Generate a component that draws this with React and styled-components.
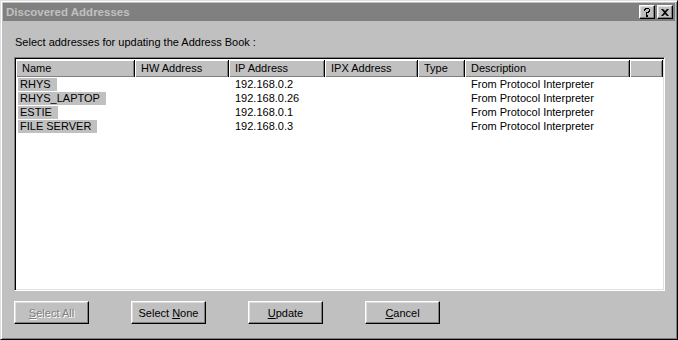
import styled, { createGlobalStyle } from 'styled-components'

const GlobalStyle = createGlobalStyle`
  html, body {
    margin: 0;
    padding: 0;
    background: #c0c0c0;
  }
  body {
    font-family: "Liberation Sans", Arial, sans-serif;
    font-size: 11px;
    color: #000;
  }
`

const columns = [
  { key: 'name', label: 'Name', width: 119 },
  { key: 'hw', label: 'HW Address', width: 94 },
  { key: 'ip', label: 'IP Address', width: 96 },
  { key: 'ipx', label: 'IPX Address', width: 93 },
  { key: 'type', label: 'Type', width: 47 },
  { key: 'desc', label: 'Description', width: 165 }
]

const rows = [
  { name: 'RHYS', ip: '192.168.0.2', desc: 'From Protocol Interpreter' },
  { name: 'RHYS_LAPTOP', ip: '192.168.0.26', desc: 'From Protocol Interpreter' },
  { name: 'ESTIE', ip: '192.168.0.1', desc: 'From Protocol Interpreter' },
  { name: 'FILE SERVER', ip: '192.168.0.3', desc: 'From Protocol Interpreter' }
]

const Window = styled.div`
  box-sizing: border-box;
  width: 678px;
  height: 340px;
  background: #c0c0c0;
  border: 1px solid;
  border-color: #dfdfdf #000 #000 #dfdfdf;
  box-shadow: inset 1px 1px 0 #fff, inset -1px -1px 0 #808080;
  padding: 2px;
  display: flex;
  flex-direction: column;
`

const TitleBar = styled.div`
  height: 18px;
  background: #808080;
  color: #c0c0c0;
  font-weight: bold;
  display: flex;
  align-items: center;
  justify-content: space-between;
  padding: 0 2px 0 3px;
`

const TitleText = styled.span`
  font-size: 11.5px;
`

const TitleButtons = styled.div`
  display: flex;
  gap: 2px;
`

const CaptionButton = styled.div`
  box-sizing: border-box;
  width: 16px;
  height: 14px;
  background: #c0c0c0;
  border: 1px solid;
  border-color: #fff #000 #000 #fff;
  box-shadow: inset -1px -1px 0 #808080, inset 1px 1px 0 #dfdfdf;
  display: flex;
  align-items: center;
  justify-content: center;
  color: #000;
`

const Content = styled.div`
  flex: 1;
  display: flex;
  flex-direction: column;
  padding: 0 10px 0 11px;
`

const Prompt = styled.div`
  margin-top: 15px;
  height: 13px;
  line-height: 13px;
  padding-left: 1px;
`

const ListView = styled.div`
  box-sizing: border-box;
  margin-top: 8px;
  width: 651px;
  height: 234px;
  background: #fff;
  border: 1px solid;
  border-color: #808080 #fff #fff #808080;
  box-shadow: inset 1px 1px 0 #000, inset -1px -1px 0 #dfdfdf;
  padding: 2px 2px 0 1px;
  overflow: hidden;
`

const HeaderRow = styled.div`
  display: flex;
  height: 17px;
`

const HeaderCell = styled.div`
  box-sizing: border-box;
  width: ${p => p.$width}px;
  flex: none;
  height: 17px;
  background: #c0c0c0;
  border-right: 1px solid #000;
  box-shadow: inset 1px 1px 0 #fff, inset -1px -1px 0 #808080;
  padding-left: 6px;
  line-height: 17px;
  white-space: nowrap;
  overflow: hidden;
`

const Row = styled.div`
  display: flex;
  height: 14px;
  line-height: 14px;
`

const Cell = styled.div`
  width: ${p => p.$width}px;
  flex: none;
  padding-left: ${p => (p.$first ? 2 : 6)}px;
  box-sizing: border-box;
  white-space: nowrap;
`

const Selected = styled.span`
  display: inline-block;
  background: #c0c0c0;
  padding: 0 6px 0 2px;
  height: 13px;
  line-height: 13px;
`

const ButtonRow = styled.div`
  display: flex;
  gap: 42px;
  margin-top: 10px;
`

const Button = styled.div`
  box-sizing: border-box;
  width: 75px;
  height: 23px;
  background: #c0c0c0;
  border: 1px solid;
  border-color: #fff #000 #000 #fff;
  box-shadow: inset -1px -1px 0 #808080, inset 1px 1px 0 #dfdfdf;
  display: flex;
  align-items: center;
  justify-content: center;
  color: ${p => (p.$disabled ? '#808080' : '#000')};
  text-shadow: ${p => (p.$disabled ? '1px 1px 0 #fff' : 'none')};
  & u {
    text-underline-offset: 1px;
  }
`

const HelpIcon = () => (
  <svg width='8' height='9' viewBox='0 0 8 9'>
    <path d='M1 1h1V0h4v1h1v3H6v1H4v2H3V4h2V3h1V1H3v1H2v1H1z M3 7h2v2H3z' fill='#000' />
  </svg>
)

const CloseIcon = () => (
  <svg width='8' height='7' viewBox='0 0 8 7'>
    <path d='M0 0h2l2 2 2-2h2L5 3.5 8 7H6L4 5 2 7H0l3-3.5z' fill='#000' />
  </svg>
)

const App = () => {
  return (
    <>
      <GlobalStyle />
      <Window>
        <TitleBar>
          <TitleText>Discovered Addresses</TitleText>
          <TitleButtons>
            <CaptionButton><HelpIcon /></CaptionButton>
            <CaptionButton><CloseIcon /></CaptionButton>
          </TitleButtons>
        </TitleBar>
        <Content>
          <Prompt>Select addresses for updating the Address Book :</Prompt>
          <ListView>
            <HeaderRow>
              {columns.map(col => (
                <HeaderCell key={col.key} $width={col.width}>{col.label}</HeaderCell>
              ))}
              <HeaderCell $width={33} />
            </HeaderRow>
            {rows.map(row => (
              <Row key={row.name}>
                <Cell $width={119} $first><Selected>{row.name}</Selected></Cell>
                <Cell $width={94} />
                <Cell $width={96}>{row.ip}</Cell>
                <Cell $width={93} />
                <Cell $width={47} />
                <Cell $width={165}>{row.desc}</Cell>
              </Row>
            ))}
          </ListView>
          <ButtonRow>
            <Button $disabled><span><u>S</u>elect All</span></Button>
            <Button><span>Select <u>N</u>one</span></Button>
            <Button><span><u>U</u>pdate</span></Button>
            <Button><span><u>C</u>ancel</span></Button>
          </ButtonRow>
        </Content>
      </Window>
    </>
  )
}

export default App
